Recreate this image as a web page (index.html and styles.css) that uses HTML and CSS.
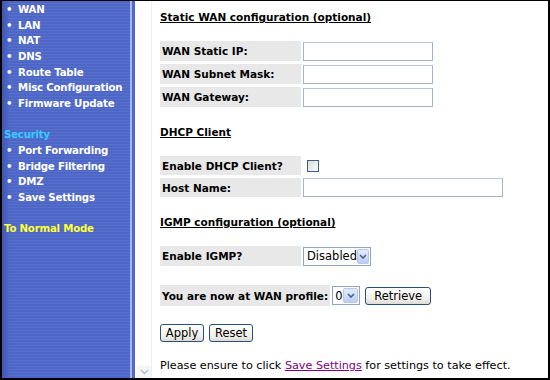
FILE: index.html
```html
<!DOCTYPE html>
<html lang="en">
<head>
    <meta charset="UTF-8">
    <title>WAN Configuration</title>
    <link rel="stylesheet" href="styles.css">
</head>
<body>
    <div class="frame">
        <div class="sidebar">
            <ul class="menu">
                <li>WAN</li>
                <li>LAN</li>
                <li>NAT</li>
                <li>DNS</li>
                <li>Route Table</li>
                <li>Misc Configuration</li>
                <li>Firmware Update</li>
            </ul>
            <div class="group">Security</div>
            <ul class="menu">
                <li>Port Forwarding</li>
                <li>Bridge Filtering</li>
                <li>DMZ</li>
                <li>Save Settings</li>
            </ul>
            <div class="mode">To Normal Mode</div>
        </div>
        <div class="scrollbar">
            <div class="arrow">
                <svg width="9" height="6" viewBox="0 0 9 6"><path d="M1 1 L4.5 4.5 L8 1" fill="none" stroke="#b8bcc4" stroke-width="1.5"/></svg>
            </div>
        </div>

        <div class="main">
            <h4 class="title first">Static WAN configuration (optional)</h4>
            <div class="row"><div class="label">WAN Static IP:</div><input class="text" type="text"></div>
            <div class="row"><div class="label">WAN Subnet Mask:</div><input class="text" type="text"></div>
            <div class="row"><div class="label">WAN Gateway:</div><input class="text" type="text"></div>

            <h4 class="title">DHCP Client</h4>
            <div class="row short"><div class="label">Enable DHCP Client?</div><span class="check"></span></div>
            <div class="row short"><div class="label">Host Name:</div><input class="text wide" type="text"></div>

            <h4 class="title">IGMP configuration (optional)</h4>
            <div class="row igmp">
                <div class="label">Enable IGMP?</div>
                <div class="select"><span class="value">Disabled</span><span class="drop"><svg width="8" height="5" viewBox="0 0 8 5"><path d="M1 1 L4 4 L7 1" fill="none" stroke="#4d6185" stroke-width="1.6"/></svg></span></div>
            </div>

            <div class="row profile">
                <div class="label fit">You are now at WAN profile:</div>
                <div class="select small"><span class="value">0</span><span class="drop"><svg width="8" height="5" viewBox="0 0 8 5"><path d="M1 1 L4 4 L7 1" fill="none" stroke="#4d6185" stroke-width="1.6"/></svg></span></div>
                <button class="btn retrieve">Retrieve</button>
            </div>

            <div class="buttons">
                <button class="btn">Apply</button>
                <button class="btn">Reset</button>
            </div>

            <p class="note">Please ensure to click <a href="#">Save Settings</a> for settings to take effect.</p>
        </div>
    </div>
</body>
</html>
```

FILE: styles.css
```css
* {
    box-sizing: border-box;
}
body {
    margin: 0;
    font-family: "DejaVu Sans", Verdana, sans-serif;
    font-size: 11px;
}
.frame {
    display: flex;
    width: 550px;
    height: 380px;
    border-top: 1px solid #000;
    border-left: 2px solid #000;
    border-right: 2px solid #000;
    border-bottom: 2px solid #000;
    overflow: hidden;
    background: #fff;
}
.sidebar {
    width: 133px;
    flex-shrink: 0;
    background:
        linear-gradient(90deg, #4058b4 0, #4c64c4 6px, transparent 7px),
        repeating-linear-gradient(180deg, #4e66c6 0 2px, #5770cc 2px 3px);
    border-right: 3px solid #5068c8;
    box-shadow: inset -2px 0 0 #a8b6ee;
    color: #fff;
    font-size: 10.2px;
    letter-spacing: -0.2px;
    font-weight: bold;
    line-height: 15.67px;
    white-space: nowrap;
    padding-top: 1px;
}
.menu {
    list-style: none;
    margin: 0;
    padding: 0 0 0 4px;
}
.menu li::before {
    content: "\2022";
    display: inline-block;
    width: 12px;
}
.group {
    margin-top: 15.67px;
    padding-left: 2px;
    color: #33ccff;
}
.mode {
    margin-top: 15.67px;
    padding-left: 2px;
    color: #ffff33;
}
.scrollbar {
    width: 17px;
    flex-shrink: 0;
    display: flex;
    flex-direction: column;
    justify-content: flex-end;
    border-left: 2px solid #fff;
    border-right: 1px solid #eef0f2;
    background: #fdfdfd;
}
.arrow {
    height: 12px;
    display: flex;
    align-items: center;
    justify-content: center;
    background: #f4f5f6;
}
.main {
    flex: 1;
    padding: 9px 0 0 8px;
    color: #000;
}
.title {
    margin: 18px 0 17px;
    font-size: 10.5px;
    line-height: 14px;
    text-decoration: underline;
}
.title.first {
    margin-top: 0;
}
.row {
    display: flex;
    align-items: center;
    gap: 2px;
    height: 20px;
    margin-bottom: 3px;
}
.row.short {
    height: 19px;
}
.label {
    width: 141px;
    height: 100%;
    display: flex;
    align-items: center;
    padding-left: 2px;
    background: #e8e8e8;
    font-size: 10.5px;
    font-weight: bold;
}
.label.fit {
    width: auto;
    padding-right: 2px;
}
.text {
    width: 130px;
    height: 19px;
    border: 1px solid #a3b5cb;
    border-top-color: #b8c7d8;
    background: #fff;
    font: inherit;
}
.text.wide {
    width: 200px;
}
.check {
    width: 12px;
    height: 12px;
    margin-left: 4px;
    border: 1px solid #3d5e87;
    background: linear-gradient(135deg, #dcdcd6, #fbfbf9);
}
.row.igmp {
    margin-bottom: 19px;
}
.select {
    display: flex;
    align-items: center;
    height: 19px;
    width: 68px;
    border: 1px solid #8ea4c4;
    background: #fff;
    font-size: 11.5px;
    padding: 1px;
}
.select .value {
    flex: 1;
    padding-left: 2px;
}
.drop {
    width: 15px;
    height: 15px;
    display: flex;
    align-items: center;
    justify-content: center;
    border: 1px solid #b4c8ec;
    background: linear-gradient(180deg, #e4ecfc, #bccdf4);
    border-radius: 2px;
}
.select.small {
    width: 28px;
}
.select.small .value {
    padding-left: 1px;
}
.row.profile {
    height: 21px;
    margin-bottom: 19px;
}
.btn {
    height: 18px;
    padding: 0 4px;
    border: 1px solid #2a4f7a;
    border-radius: 3px;
    background: linear-gradient(180deg, #ffffff, #f0efea 70%, #dcdad2);
    font-family: "DejaVu Sans", Verdana, sans-serif;
    font-size: 11.5px;
    line-height: 14px;
    color: #000;
}
.retrieve {
    margin-left: 3px;
    width: 66px;
}
.buttons {
    display: flex;
    gap: 5px;
    margin-top: -1px;
}
.buttons .btn {
    width: 44px;
}
.note {
    margin: 17px 0 0;
    font-size: 11.2px;
    line-height: 14px;
}
.note a {
    color: #800080;
}
```
